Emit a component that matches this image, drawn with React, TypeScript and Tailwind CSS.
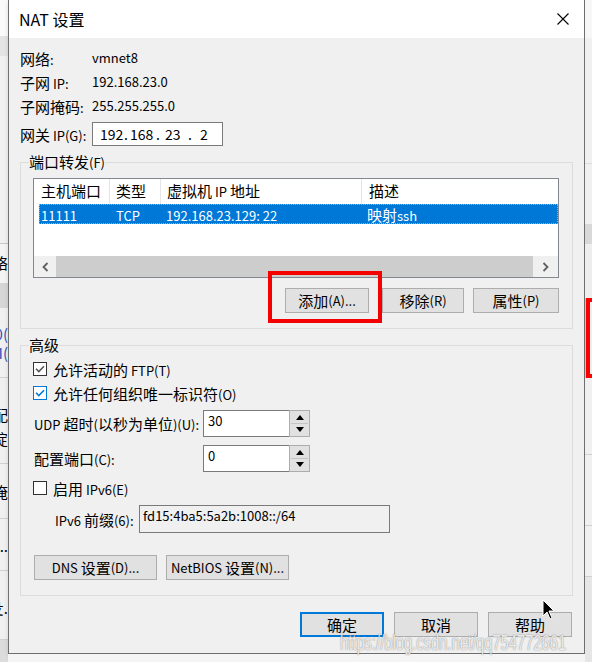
import React from "react";

const font = "font-['Noto_Sans_CJK_SC','Noto_Sans',sans-serif]";

// Windows YaHei UI draws Latin smaller than CJK: split runs and size them apart
function M({ children }: { children: string }) {
  const parts = children.split(/([\u3000-\u303f\u3400-\u9fff\uff00-\uffef]+)/);
  return (
    <>
      {parts.map((p, i) =>
        p === "" ? null : i % 2 === 1 ? (
          <span key={i} className="text-[15px]">
            {p}
          </span>
        ) : (
          <span key={i} className="text-[13px]">
            {p}
          </span>
        )
      )}
    </>
  );
}

function Btn({ children, w, primary }: { children: string; w: string; primary?: boolean }) {
  return (
    <button
      className={`${w} h-[25px] shrink-0 bg-[#e1e1e1] text-black leading-none flex items-center justify-center whitespace-pre ${
        primary ? "border-2 border-[#0078d7]" : "border border-[#adadad]"
      }`}
    >
      <M>{children}</M>
    </button>
  );
}

function Check({ checked, focus }: { checked?: boolean; focus?: boolean }) {
  return (
    <span
      className={`w-[14px] h-[14px] shrink-0 bg-white border flex items-center justify-center ${
        focus ? "border-[#0078d7]" : "border-[#333333]"
      }`}
    >
      {checked && (
        <svg width="10" height="8" viewBox="0 0 10 8">
          <path d="M1 3.8 L3.8 6.6 L9 1.2" fill="none" stroke={focus ? "#0078d7" : "#555555"} strokeWidth="1.5" />
        </svg>
      )}
    </span>
  );
}

function Spin({ value }: { value: string }) {
  return (
    <div className="flex h-[27px]">
      <div className="w-[86px] h-full bg-white border border-r-0 border-[#7a7a7a] pl-[4px] text-[13px] leading-[20px]">
        {value}
      </div>
      <div className="w-[21px] h-full border border-[#adadad] bg-[#e1e1e1] flex flex-col p-[1px] gap-[1px]">
        <div className="flex-1 flex items-center justify-center border-b border-[#c4c4c4]">
          <svg width="8" height="5" viewBox="0 0 8 5">
            <path d="M0 5 L4 0 L8 5 Z" fill="#000" />
          </svg>
        </div>
        <div className="flex-1 flex items-center justify-center">
          <svg width="8" height="5" viewBox="0 0 8 5">
            <path d="M0 0 L8 0 L4 5 Z" fill="#000" />
          </svg>
        </div>
      </div>
    </div>
  );
}

function GroupLabel({ children }: { children: string }) {
  return (
    <div className="h-[18px] -mt-[10px] flex">
      <span className="h-[18px] -ml-[4px] bg-[#f0f0f0] flex items-baseline whitespace-pre leading-[18px]">
        <M>{children}</M>
      </span>
    </div>
  );
}

function InfoRow({ label, value }: { label: string; value: string }) {
  return (
    <div className="h-[24px] flex items-center whitespace-pre">
      <span className="w-[72px] shrink-0">
        <M>{label}</M>
      </span>
      <span className="text-[13px]">{value}</span>
    </div>
  );
}

function Line({ children }: { children: string }) {
  return (
    <span className="whitespace-pre">
      <M>{children}</M>
    </span>
  );
}

const leftStrip: { h: string; bg: string; text?: string; color?: string }[] = [
  { h: "h-[36px]", bg: "bg-[#fafafa]" },
  { h: "h-[20px]", bg: "bg-[#e4e4e4]" },
  { h: "h-[187px]", bg: "bg-[#f0f0f0]" },
  { h: "h-[1px]", bg: "bg-[#c8c8c8]" },
  { h: "h-[39px]", bg: "bg-[#f4f4f4]", text: "网络" },
  { h: "h-[25px]", bg: "bg-[#d6d6d6]" },
  { h: "h-[16px]", bg: "bg-[#f0f0f0]" },
  { h: "h-[20px]", bg: "bg-[#f0f0f0]", text: "(0(", color: "text-[#2a52be]" },
  { h: "h-[18px]", bg: "bg-[#f0f0f0]", text: "(I(", color: "text-[#2a52be]" },
  { h: "h-[15px]", bg: "bg-[#f0f0f0]" },
  { h: "h-[1px]", bg: "bg-[#d0d0d0]" },
  { h: "h-[25px]", bg: "bg-[#f0f0f0]" },
  { h: "h-[24px]", bg: "bg-[#f0f0f0]", text: "配" },
  { h: "h-[24px]", bg: "bg-[#f0f0f0]", text: "掟" },
  { h: "h-[12px]", bg: "bg-[#f0f0f0]" },
  { h: "h-[1px]", bg: "bg-[#d0d0d0]" },
  { h: "h-[16px]", bg: "bg-[#f0f0f0]" },
  { h: "h-[24px]", bg: "bg-[#f0f0f0]", text: "俺" },
  { h: "h-[14px]", bg: "bg-[#f0f0f0]" },
  { h: "h-[1px]", bg: "bg-[#d0d0d0]" },
  { h: "h-[18px]", bg: "bg-[#f0f0f0]" },
  { h: "h-[18px]", bg: "bg-[#f0f0f0]", text: "n.." },
  { h: "h-[15px]", bg: "bg-[#f0f0f0]" },
  { h: "h-[1px]", bg: "bg-[#d0d0d0]" },
  { h: "h-[25px]", bg: "bg-[#f0f0f0]" },
  { h: "h-[24px]", bg: "bg-[#f0f0f0]", text: "殳." },
  { h: "h-[19px]", bg: "bg-[#f0f0f0]" },
  { h: "h-[1px]", bg: "bg-[#d0d0d0]" },
  { h: "h-[30px]", bg: "bg-[#dcdcdc]" },
];

export default function App() {
  return (
    <div className={`relative w-[592px] h-[662px] overflow-hidden flex bg-[#ececec] text-black ${font}`}>
      {/* window behind, left edge */}
      <div className="w-[8px] shrink-0 flex flex-col overflow-hidden">
        {leftStrip.map((s, i) => (
          <div
            key={i}
            className={`${s.h} ${s.bg} shrink-0 flex items-center justify-end overflow-hidden whitespace-nowrap text-[15px] ${s.color ?? "text-black"}`}
          >
            {s.text}
          </div>
        ))}
      </div>

      <div className="w-[577px] shrink-0 flex flex-col">
        {/* Dialog */}
        <div className="h-[654px] shrink-0 flex flex-col border border-t-0 border-[#6e6e6e] bg-[#f0f0f0] shadow-[2px_2px_6px_rgba(0,0,0,0.25)]">
          {/* Title bar */}
          <div className="h-[38px] shrink-0 bg-white flex items-center justify-between pl-[10px] pr-[15px]">
            <span className="text-[16px]">NAT 设置</span>
            <svg width="12" height="12" viewBox="0 0 12 12">
              <path d="M0.5 0.5 L11.5 11.5 M11.5 0.5 L0.5 11.5" stroke="#000" strokeWidth="1.1" />
            </svg>
          </div>

          <div className="flex-1 flex flex-col px-[11px]">
            {/* Info */}
            <div className="pt-[8px] flex flex-col">
              <InfoRow label="网络:" value="vmnet8" />
              <InfoRow label="子网 IP:" value="192.168.23.0" />
              <InfoRow label="子网掩码:" value="255.255.255.0" />
              <div className="mt-[4px] h-[24px] flex items-center">
                <span className="w-[72px] shrink-0 whitespace-pre">
                  <M>网关 IP(G):</M>
                </span>
                <div className="w-[131px] h-[24px] bg-white border border-[#7a7a7a] flex items-center pl-[7px] text-[14px]">
                  <span className="w-[24px]">192</span>
                  <span className="w-[6px]">.</span>
                  <span className="w-[26px]">168</span>
                  <span className="w-[9px]">.</span>
                  <span className="w-[23px]">23</span>
                  <span className="w-[12px]">.</span>
                  <span>2</span>
                </div>
              </div>
            </div>

            {/* Port forwarding */}
            <div className="mt-[16px] border border-[#dcdcdc] pl-[12px] pr-[13px] pb-[15px]">
              <GroupLabel>端口转发(F)</GroupLabel>
              <div className="mt-[7px] h-[100px] border border-[#828790] bg-white flex flex-col">
                <div className="h-[25px] shrink-0 flex whitespace-pre">
                  <div className="w-[76px] pl-[7px] flex items-center border-r border-[#e5e5e5]">
                    <M>主机端口</M>
                  </div>
                  <div className="w-[51px] pl-[6px] flex items-center border-r border-[#e5e5e5]">
                    <M>类型</M>
                  </div>
                  <div className="w-[201px] pl-[6px] flex items-center border-r border-[#e5e5e5]">
                    <M>虚拟机 IP 地址</M>
                  </div>
                  <div className="flex-1 pl-[7px] flex items-center">
                    <M>描述</M>
                  </div>
                </div>
                <div className="flex-1">
                  <div className="ml-[5px] h-[20px] bg-[#0078d7] text-white flex items-center border border-dotted border-[#f0a040] whitespace-pre">
                    <span className="w-[70px] pl-[1px]">
                      <M>11111</M>
                    </span>
                    <span className="w-[50px] pl-[6px]">
                      <M>TCP</M>
                    </span>
                    <span className="w-[200px] pl-[6px]">
                      <M>192.168.23.129: 22</M>
                    </span>
                    <span className="pl-[7px]">
                      <M>映射ssh</M>
                    </span>
                  </div>
                </div>
                <div className="h-[21px] shrink-0 flex">
                  <div className="w-[22px] bg-[#f0f0f0] flex items-center justify-center">
                    <svg width="7" height="10" viewBox="0 0 7 10">
                      <path d="M5.5 1 L1.5 5 L5.5 9" fill="none" stroke="#606060" strokeWidth="1.8" />
                    </svg>
                  </div>
                  <div className="flex-1 bg-[#cdcdcd]" />
                  <div className="w-[25px] bg-[#f0f0f0] flex items-center justify-center">
                    <svg width="7" height="10" viewBox="0 0 7 10">
                      <path d="M1.5 1 L5.5 5 L1.5 9" fill="none" stroke="#606060" strokeWidth="1.8" />
                    </svg>
                  </div>
                </div>
              </div>
              <div className="mt-[10px] flex justify-end">
                <Btn w="w-[84px]">添加(A)...</Btn>
                <div className="w-[13px]" />
                <Btn w="w-[82px]">移除(R)</Btn>
                <div className="w-[9px]" />
                <Btn w="w-[86px]">属性(P)</Btn>
              </div>
            </div>

            {/* Advanced */}
            <div className="mt-[16px] border border-[#dcdcdc] pl-[12px] pb-[15px]">
              <GroupLabel>高级</GroupLabel>
              <div className="mt-[3px] h-[24px] flex items-center gap-[6px]">
                <Check checked />
                <Line>允许活动的 FTP(T)</Line>
              </div>
              <div className="h-[24px] flex items-center gap-[6px]">
                <Check checked focus />
                <Line>允许任何组织唯一标识符(O)</Line>
              </div>
              <div className="mt-[5px] flex items-center">
                <span className="w-[170px] shrink-0 pl-[1px] whitespace-pre">
                  <M>UDP 超时(以秒为单位)(U):</M>
                </span>
                <Spin value="30" />
              </div>
              <div className="mt-[8px] flex items-center">
                <span className="w-[170px] shrink-0 pl-[1px] whitespace-pre">
                  <M>配置端口(C):</M>
                </span>
                <Spin value="0" />
              </div>
              <div className="mt-[4px] h-[24px] flex items-center gap-[6px]">
                <Check />
                <Line>启用 IPv6(E)</Line>
              </div>
              <div className="mt-[5px] flex items-center">
                <span className="w-[106px] shrink-0 pl-[22px] whitespace-pre">
                  <M>IPv6 前缀(6):</M>
                </span>
                <div className="w-[251px] h-[28px] border border-[#7a7a7a] bg-[#f0f0f0] pl-[3px] text-[13px] leading-[20px]">
                  fd15:4ba5:5a2b:1008::/64
                </div>
              </div>
              <div className="mt-[22px] ml-[1px] flex gap-[9px]">
                <Btn w="w-[123px]">DNS 设置(D)...</Btn>
                <Btn w="w-[123px]">NetBIOS 设置(N)...</Btn>
              </div>
            </div>

            {/* Footer */}
            <div className="mt-[16px] mr-[1px] flex justify-end gap-[10px]">
              <Btn w="w-[84px]" primary>
                确定
              </Btn>
              <Btn w="w-[84px]">取消</Btn>
              <Btn w="w-[84px]">帮助</Btn>
            </div>
          </div>
        </div>
        <div className="flex-1 bg-[#f5f5f5]" />
      </div>

      {/* window behind, right edge */}
      <div className="flex-1 flex flex-col">
        <div className="h-[38px] bg-[#f7f7f7]" />
        <div className="h-[125px] bg-[#f0f0f0]" />
        <div className="h-[1px] bg-[#dcdcdc]" />
        <div className="h-[60px] bg-[#f0f0f0]" />
        <div className="h-[20px] bg-[#d8d8d8]" />
        <div className="h-[54px] bg-[#eeeeee]" />
        <div className="h-[80px] ml-[1px] border-l-4 border-y-4 border-[#ff0000] bg-[#f0f0f0]" />
        <div className="h-[76px] bg-[#f0f0f0]" />
        <div className="h-[1px] bg-[#d0d0d0]" />
        <div className="h-[70px] bg-[#f0f0f0]" />
        <div className="h-[1px] bg-[#d0d0d0]" />
        <div className="h-[50px] bg-[#f0f0f0]" />
        <div className="h-[1px] bg-[#d0d0d0]" />
        <div className="flex-1 bg-[#e6e6e6]" />
      </div>

      {/* red annotation */}
      <div className="absolute left-[268px] top-[271px] w-[114px] h-[52px] border-4 border-[#f40000]" />

      {/* watermark */}
      <div className="absolute left-[340px] top-[626px] whitespace-nowrap font-['Liberation_Sans',sans-serif] text-[22px] text-white/85 origin-left scale-x-[0.67] [text-shadow:0_0_1.5px_rgba(0,0,0,0.6)]">
        https://blog.csdn.net/qq754772661
      </div>

      {/* mouse cursor */}
      <svg className="absolute left-[542px] top-[599px]" width="14" height="22" viewBox="0 0 14 22">
        <path d="M1 1 L1 17 L5 13 L8 20 L10 19 L7 12 L12 12 Z" fill="#000" stroke="#fff" strokeWidth="1" />
      </svg>
    </div>
  );
}
